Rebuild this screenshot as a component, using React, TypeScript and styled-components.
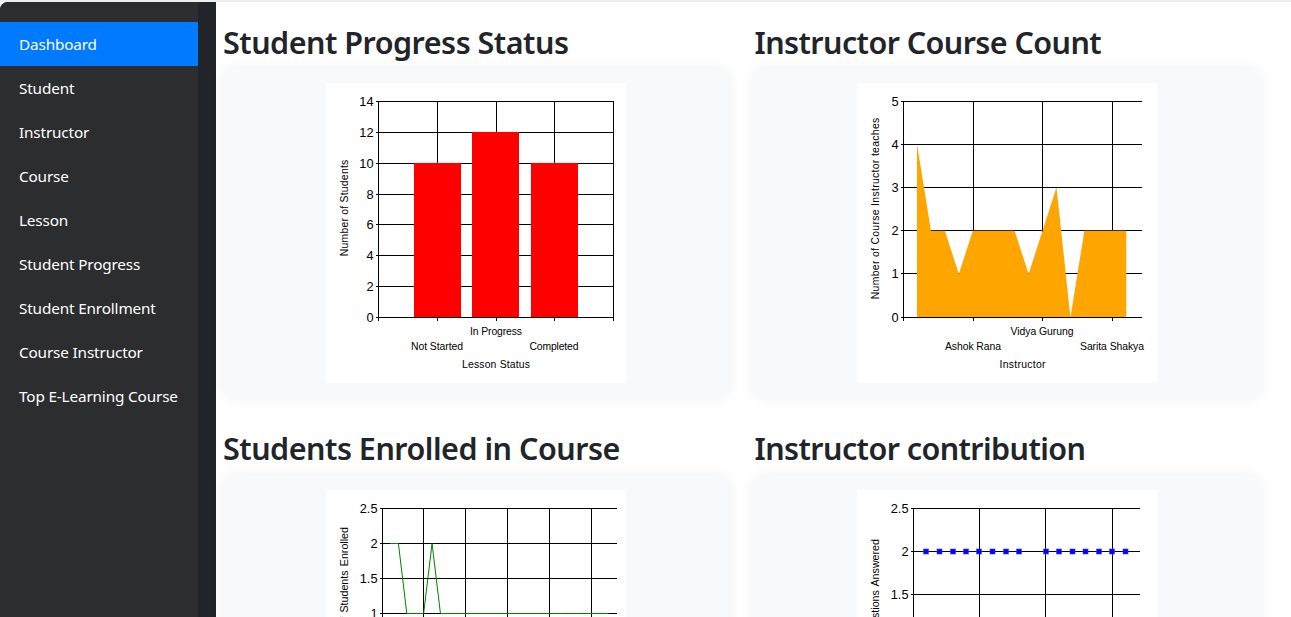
import React from "react";
import styled, { createGlobalStyle } from "styled-components";

const Global = createGlobalStyle`
  html, body { margin: 0; padding: 0; height: 100%; overflow: hidden; background: #fff; }
  #root { height: 100%; }
  * { box-sizing: border-box; }
`;

const Page = styled.div`
  display: flex;
  height: 100vh;
  border-top: 2px solid #eeeeee;
  font-family: "Noto Sans", "Open Sans", sans-serif;
  color: #212529;
`;

const SideWrap = styled.aside`
  flex: 0 0 216px;
  background: #212529;
  border-top-left-radius: 8px;
  padding-right: 18px;
`;

const SideNav = styled.nav`
  height: 100%;
  background: #2b2d2f;
  border-top-left-radius: 8px;
  padding-top: 20px;
  display: flex;
  flex-direction: column;
`;

const NavItem = styled.a<{ $active?: boolean }>`
  display: flex;
  align-items: center;
  height: 44px;
  padding-left: 19px;
  font-size: 15.3px;
  letter-spacing: -0.15px;
  color: #fff;
  background: ${(p) => (p.$active ? "#007bff" : "transparent")};
`;

const Main = styled.main`
  flex: 1;
  min-width: 0;
  padding: 20.6px 30px 0 7px;
  display: grid;
  grid-template-columns: 507px 508px;
  column-gap: 23px;
  row-gap: 31.2px;
  align-content: start;
`;

const Section = styled.section`
  display: flex;
  flex-direction: column;
`;

const Title = styled.h2<{ $inset?: boolean }>`
  margin: 0 0 6px ${(p) => (p.$inset ? "1.5px" : "0")};
  height: 39.4px;
  font-size: 30.5px;
  line-height: 39px;
  font-weight: 600;
  letter-spacing: ${(p) => (p.$inset ? "-0.58px" : "-0.5px")};
  white-space: nowrap;
`;

const Card = styled.div`
  background: #f8f9fa;
  border-radius: 10px;
  box-shadow: 0 0 14px rgba(0, 0, 0, 0.06);
  padding: 15px 1px 15px 0;
  display: flex;
  justify-content: center;
`;

const ChartSvg = styled.svg`
  display: block;
  width: 300px;
  height: 300px;
  background: #fff;
  font-family: "Liberation Sans", Arial, sans-serif;
`;

const TickText = styled.text`
  font-size: 12.8px;
  fill: #000;
  text-anchor: end;
`;

const SmallText = styled.text`
  font-size: 10.4px;
  fill: #000;
  text-anchor: middle;
`;

const ClippedAxisTitle = styled(SmallText)`
  font-size: 10.7px;
  word-spacing: 1.2px;
  text-anchor: end;
`;

type AxisProps = {
  left: number;
  right: number;
  bottom?: number;
  hLines: { y: number; label: string }[];
  vLines: number[];
  yTitle: string;
  yTitleY: number;
  yTitleLen?: number;
  yAnchorEnd?: boolean;
  cats?: { x: number; y: number; t: string; w: number }[];
  xTitle?: { x: number; t: string; w: number };
  children?: React.ReactNode;
};

const BOTTOM = 234.5;

function Chart({ left, right, bottom = BOTTOM, hLines, vLines, yTitle, yTitleY, yTitleLen, yAnchorEnd, cats, xTitle, children }: AxisProps) {
  const top = hLines[hLines.length - 1].y;
  return (
    <ChartSvg viewBox="0 0 300 300">
      <g stroke="#000" strokeWidth="1" shapeRendering="crispEdges">
        {hLines.map((l) => (
          <line key={l.label} x1={left - 3} x2={right} y1={l.y} y2={l.y} />
        ))}
        <line x1={left} x2={left} y1={top} y2={bottom + 3} />
        {vLines.map((x) => (
          <line key={x} x1={x} x2={x} y1={top} y2={bottom + 3} />
        ))}
      </g>
      {children}
      <line x1={left} x2={right} y1={bottom} y2={bottom} stroke="#000" shapeRendering="crispEdges" />
      {hLines.map((l) => (
        <TickText key={l.label} x={left - 5} y={l.y + 4.5}>
          {l.label}
        </TickText>
      ))}
      {yAnchorEnd ? (
        <ClippedAxisTitle transform={`translate(21.5 ${yTitleY}) rotate(-90)`}>{yTitle}</ClippedAxisTitle>
      ) : (
        <SmallText
          transform={`translate(21.5 ${yTitleY}) rotate(-90)`}
          textLength={yTitleLen}
          lengthAdjust="spacing"
        >
          {yTitle}
        </SmallText>
      )}
      {cats?.map((c) => (
        <SmallText key={c.t} x={c.x} y={c.y} textLength={c.w} lengthAdjust="spacing">
          {c.t}
        </SmallText>
      ))}
      {xTitle && (
        <SmallText x={xTitle.x} y={284.5} textLength={xTitle.w} lengthAdjust="spacing">
          {xTitle.t}
        </SmallText>
      )}
    </ChartSvg>
  );
}

const nav = [
  "Dashboard",
  "Student",
  "Instructor",
  "Course",
  "Lesson",
  "Student Progress",
  "Student Enrollment",
  "Course Instructor",
  "Top E-Learning Course",
];

const progressBars = [
  { x: 88, w: 47, y: 80 },
  { x: 146, w: 47, y: 49 },
  { x: 205, w: 47, y: 80 },
];

const ProgressChart = () => (
  <Chart
    left={52.5}
    right={287.5}
    hLines={[
      { y: 234.5, label: "0" },
      { y: 203.5, label: "2" },
      { y: 172.5, label: "4" },
      { y: 141.5, label: "6" },
      { y: 111.5, label: "8" },
      { y: 80.5, label: "10" },
      { y: 49.5, label: "12" },
      { y: 18.5, label: "14" },
    ]}
    vLines={[111.5, 170.5, 228.5, 287.5]}
    yTitle="Number of Students"
    yTitleY={125}
    yTitleLen={96.5}
    cats={[
      { x: 170, y: 252, t: "In Progress", w: 52 },
      { x: 111, y: 267, t: "Not Started", w: 52 },
      { x: 228, y: 267, t: "Completed", w: 49 },
    ]}
    xTitle={{ x: 170, t: "Lesson Status", w: 68 }}
  >
    {progressBars.map((b) => (
      <rect key={b.x} x={b.x} y={b.y} width={b.w} height={BOTTOM - b.y} fill="#ff0000" />
    ))}
  </Chart>
);

const instructorValues = [4, 2, 2, 1, 2, 2, 2, 2, 1, 2, 3, 0, 2, 2, 2, 2];
const instructorPath =
  "M60 234.5 " +
  instructorValues.map((v, i) => `L${60 + i * 13.95} ${234.5 - v * 43.4}`).join(" ") +
  ` L${60 + 15 * 13.95} 234.5 Z`;

const CountChart = () => (
  <Chart
    left={46.5}
    right={284.5}
    hLines={[
      { y: 234.5, label: "0" },
      { y: 190.5, label: "1" },
      { y: 147.5, label: "2" },
      { y: 104.5, label: "3" },
      { y: 61.5, label: "4" },
      { y: 18.5, label: "5" },
    ]}
    vLines={[116.5, 185.5, 255.5]}
    yTitle="Number of Course Instructor teaches"
    yTitleY={125.5}
    yTitleLen={181.5}
    cats={[
      { x: 185, y: 252, t: "Vidya Gurung", w: 63 },
      { x: 116, y: 267, t: "Ashok Rana", w: 56 },
      { x: 255, y: 267, t: "Sarita Shakya", w: 64 },
    ]}
    xTitle={{ x: 165.5, t: "Instructor", w: 46 }}
  >
    <path d={instructorPath} fill="#ffa500" />
  </Chart>
);

const enrolledValues = [2, 2, 1, 1, 1, 2, 1, 1, 1, 1, 1, 1, 1, 1, 1, 1, 1, 1, 1, 1, 1, 1, 1, 1, 1, 1, 1];
const enrolledPoints = enrolledValues
  .map((v, i) => `${64 + i * 8.41},${193.5 - v * 70}`)
  .join(" ");

const EnrolledChart = () => (
  <Chart
    left={56.5}
    right={290.5}
    bottom={193.5}
    hLines={[
      { y: 193.5, label: "0" },
      { y: 158.5, label: "0.5" },
      { y: 123.5, label: "1" },
      { y: 88.5, label: "1.5" },
      { y: 53.5, label: "2" },
      { y: 18.5, label: "2.5" },
    ]}
    vLines={[97.5, 139.5, 181.5, 223.5, 265.5]}
    yTitle="Number of Students Enrolled"
    yTitleY={37}
    yAnchorEnd
  >
    <polyline points={enrolledPoints} fill="none" stroke="#008000" strokeWidth="1" />
  </Chart>
);

const contributionXs = [69, 82.5, 96, 109, 122, 135.5, 149, 162, 189, 202, 215.5, 228.5, 242, 255, 268.5];

const ContributionChart = () => (
  <Chart
    left={56.5}
    right={282.5}
    hLines={[
      { y: 234.5, label: "0" },
      { y: 190.5, label: "0.5" },
      { y: 147.5, label: "1" },
      { y: 104.5, label: "1.5" },
      { y: 61.5, label: "2" },
      { y: 18.5, label: "2.5" },
    ]}
    vLines={[122.5, 188.5, 255.5]}
    yTitle="Number of Questions Answered"
    yTitleY={49}
    yAnchorEnd
  >
    {contributionXs.map((x) => (
      <rect key={x} x={x - 2.5} y={59} width={5} height={5} fill="#0000ff" stroke="rgba(60,60,255,0.6)" strokeWidth="1" />
    ))}
  </Chart>
);

export default function App() {
  return (
    <Page>
      <Global />
      <SideWrap>
        <SideNav>
          {nav.map((n, i) => (
            <NavItem key={n} $active={i === 0}>
              {n}
            </NavItem>
          ))}
        </SideNav>
      </SideWrap>
      <Main>
        <Section>
          <Title>Student Progress Status</Title>
          <Card>
            <ProgressChart />
          </Card>
        </Section>
        <Section>
          <Title $inset>Instructor Course Count</Title>
          <Card>
            <CountChart />
          </Card>
        </Section>
        <Section>
          <Title>Students Enrolled in Course</Title>
          <Card>
            <EnrolledChart />
          </Card>
        </Section>
        <Section>
          <Title $inset>Instructor contribution</Title>
          <Card>
            <ContributionChart />
          </Card>
        </Section>
      </Main>
    </Page>
  );
}
